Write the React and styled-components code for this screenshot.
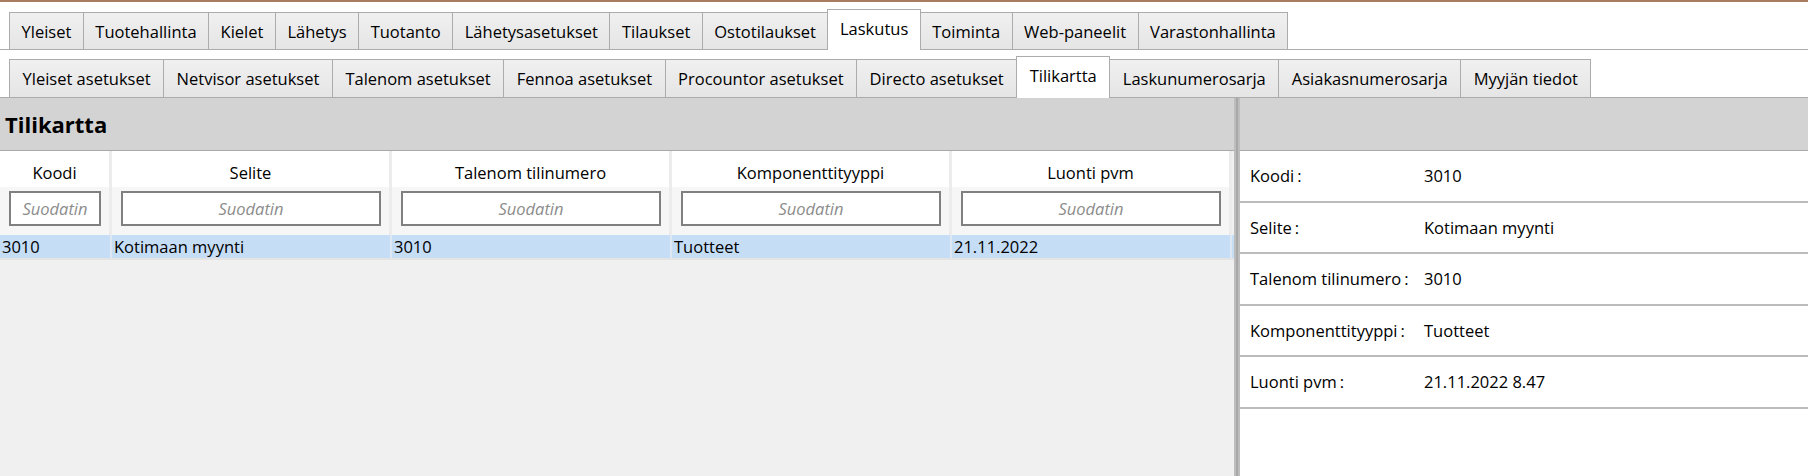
import React from "react";
import styled, { createGlobalStyle } from "styled-components";

const mainTabs = [
  "Yleiset",
  "Tuotehallinta",
  "Kielet",
  "Lähetys",
  "Tuotanto",
  "Lähetysasetukset",
  "Tilaukset",
  "Ostotilaukset",
  "Laskutus",
  "Toiminta",
  "Web-paneelit",
  "Varastonhallinta",
];

const subTabs = [
  "Yleiset asetukset",
  "Netvisor asetukset",
  "Talenom asetukset",
  "Fennoa asetukset",
  "Procountor asetukset",
  "Directo asetukset",
  "Tilikartta",
  "Laskunumerosarja",
  "Asiakasnumerosarja",
  "Myyjän tiedot",
];

const columns = [
  { title: "Koodi", width: 112, value: "3010" },
  { title: "Selite", width: 280, value: "Kotimaan myynti" },
  { title: "Talenom tilinumero", width: 280, value: "3010" },
  { title: "Komponenttityyppi", width: 280, value: "Tuotteet" },
  { title: "Luonti pvm", width: 280, value: "21.11.2022" },
];

const details = [
  ["Koodi", "3010"],
  ["Selite", "Kotimaan myynti"],
  ["Talenom tilinumero", "3010"],
  ["Komponenttityyppi", "Tuotteet"],
  ["Luonti pvm", "21.11.2022 8.47"],
];

const GlobalStyle = createGlobalStyle`
  * { box-sizing: border-box; }
  body {
    margin: 0;
    background: #ffffff;
    font-family: "Segoe UI", "Open Sans", sans-serif;
    color: #000;
  }
`;

function App() {
  return (
    <>
      <GlobalStyle />
      <Page>
        <TabStrip $offset={7}>
          {mainTabs.map((t) => (
            <Tab key={t} $h={37} $pad={11.5} $active={t === "Laskutus"}>
              {t}
            </Tab>
          ))}
        </TabStrip>
        <TabStrip $offset={6}>
          {subTabs.map((t) => (
            <Tab key={t} $h={38} $pad={12.5} $active={t === "Tilikartta"}>
              {t}
            </Tab>
          ))}
        </TabStrip>
        <Workspace>
          <Panel>
            <PanelHeader>Tilikartta</PanelHeader>
            <DataGrid>
              <HeaderRow>
                {columns.map((c) => (
                  <HeaderCell key={c.title} $w={c.width}>
                    <HeaderLabel>{c.title}</HeaderLabel>
                    <FilterWrap>
                      <Filter placeholder="Suodatin" readOnly />
                    </FilterWrap>
                  </HeaderCell>
                ))}
              </HeaderRow>
              <DataRow>
                {columns.map((c) => (
                  <DataCell key={c.title} $w={c.width}>
                    {c.value}
                  </DataCell>
                ))}
              </DataRow>
            </DataGrid>
          </Panel>
          <Splitter />
          <Panel $white>
            <PanelHeader />
            {details.map(([label, value]) => (
              <DetailRow key={label}>
                <DetailLabel>
                  {label}
                  <Colon>:</Colon>
                </DetailLabel>
                <span>{value}</span>
              </DetailRow>
            ))}
          </Panel>
        </Workspace>
      </Page>
    </>
  );
}

const Page = styled.div`
  width: 1808px;
  height: 476px;
  overflow: hidden;
  border-top: 2px solid #a77c5f;
  display: flex;
  flex-direction: column;
`;

const TabStrip = styled.div`
  display: flex;
  align-items: flex-end;
  padding-left: 9px;
  margin-top: ${(p) => p.$offset}px;
  border-bottom: 1px solid #acacac;
  flex-shrink: 0;
`;

const Tab = styled.div`
  position: relative;
  height: ${(p) => (p.$active ? p.$h + 4 : p.$h)}px;
  margin-bottom: ${(p) => (p.$active ? "-1px" : "0")};
  margin-right: -1px;
  padding: 0 ${(p) => p.$pad}px;
  padding-bottom: ${(p) => (p.$active ? "4px" : "0")};
  display: flex;
  align-items: center;
  border: 1px solid #acacac;
  border-bottom: none;
  background: ${(p) =>
    p.$active ? "#ffffff" : "linear-gradient(#f0f0f0, #e5e5e5)"};
  z-index: ${(p) => (p.$active ? 2 : 1)};
  font-size: 16.5px;
  white-space: nowrap;
`;

const Workspace = styled.div`
  flex: 1;
  display: grid;
  grid-template-columns: 1234px 6px 1fr;
  min-height: 0;
`;

const Panel = styled.div`
  display: flex;
  flex-direction: column;
  background: ${(p) => (p.$white ? "#ffffff" : "#f0f0f0")};
  min-width: 0;
`;

const PanelHeader = styled.div`
  height: 53px;
  flex-shrink: 0;
  background: #d3d3d3;
  border-bottom: 1px solid #a9a9a9;
  display: flex;
  align-items: center;
  padding-left: 5px;
  font-size: 22px;
  font-weight: 700;
`;

const DataGrid = styled.div`
  display: flex;
  flex-direction: column;
`;

const HeaderRow = styled.div`
  display: flex;
`;

const HeaderCell = styled.div`
  width: ${(p) => p.$w}px;
  flex-shrink: 0;
  display: flex;
  flex-direction: column;
  background: #ffffff;
  border-right: 3px solid #ececec;
`;

const HeaderLabel = styled.div`
  height: 36px;
  display: flex;
  align-items: flex-end;
  justify-content: center;
  padding-bottom: 3px;
  font-size: 16.5px;
`;

const FilterWrap = styled.div`
  background: #f6f6f6;
  padding: 4px 8px 9px 9px;
`;

const Filter = styled.input`
  width: 100%;
  height: 35px;
  border: 2px solid #808080;
  background: #ffffff;
  text-align: center;
  font-family: inherit;
  font-size: 16.5px;
  font-style: italic;
  outline: none;
  &::placeholder {
    color: #8c8c8c;
  }
`;

const DataRow = styled.div`
  display: flex;
  height: 25px;
  background: #c5ddf5;
  border-bottom: 2px solid #e4e4e4;
`;

const DataCell = styled.div`
  width: ${(p) => p.$w}px;
  flex-shrink: 0;
  padding-left: 2px;
  display: flex;
  align-items: center;
  font-size: 16.5px;
  border-right: 2px solid #dde8f3;
`;

const Splitter = styled.div`
  background: #a8a8a8;
  border-left: 2px solid #bdbdbd;
  border-right: 2px solid #bdbdbd;
`;

const DetailRow = styled.div`
  display: grid;
  grid-template-columns: 174px 1fr;
  align-items: center;
  height: 51.5px;
  padding-left: 10px;
  border-bottom: 2px solid #bcbcbc;
  font-size: 16.5px;
`;

const DetailLabel = styled.span`
  white-space: nowrap;
`;

const Colon = styled.span`
  margin-left: 3px;
`;

export default App;
